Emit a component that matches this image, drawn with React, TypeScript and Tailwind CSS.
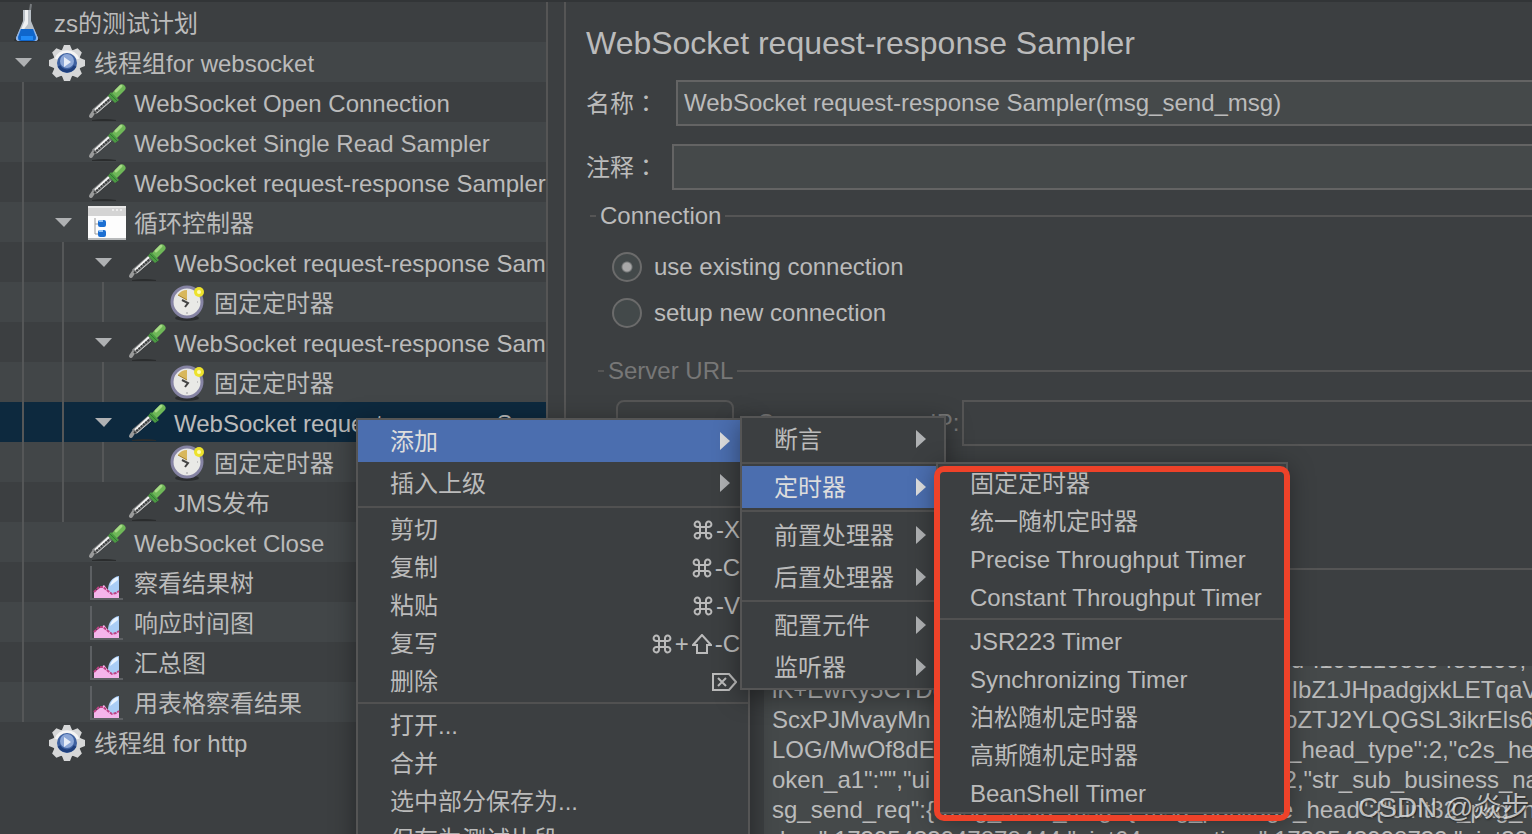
import { Fragment, ReactNode } from "react";

type IconName = "plan" | "group" | "sampler" | "loop" | "timer" | "chart";

type TreeRow = {
  label: string;
  depth: number;
  icon: IconName;
  open?: boolean;
  selected?: boolean;
};

type MenuEntry = {
  label: string;
  keys?: ReactNode;
  submenu?: boolean;
  active?: boolean;
};

const rows: TreeRow[] = [
  { label: "zs的测试计划", depth: 0, icon: "plan" },
  { label: "线程组for websocket", depth: 1, icon: "group", open: true },
  { label: "WebSocket Open Connection", depth: 2, icon: "sampler" },
  { label: "WebSocket Single Read Sampler", depth: 2, icon: "sampler" },
  { label: "WebSocket request-response Sampler", depth: 2, icon: "sampler" },
  { label: "循环控制器", depth: 2, icon: "loop", open: true },
  { label: "WebSocket request-response Sampler", depth: 3, icon: "sampler", open: true },
  { label: "固定定时器", depth: 4, icon: "timer" },
  { label: "WebSocket request-response Sampler", depth: 3, icon: "sampler", open: true },
  { label: "固定定时器", depth: 4, icon: "timer" },
  { label: "WebSocket request-response Sampler", depth: 3, icon: "sampler", open: true, selected: true },
  { label: "固定定时器", depth: 4, icon: "timer" },
  { label: "JMS发布", depth: 3, icon: "sampler" },
  { label: "WebSocket Close", depth: 2, icon: "sampler" },
  { label: "察看结果树", depth: 2, icon: "chart" },
  { label: "响应时间图", depth: 2, icon: "chart" },
  { label: "汇总图", depth: 2, icon: "chart" },
  { label: "用表格察看结果", depth: 2, icon: "chart" },
  { label: "线程组 for http", depth: 1, icon: "group" },
];

const requestData = [
  " ".repeat(75) + '_id":195216889489269,',
  "lK+EwRy5CTDc" + " ".repeat(52) + "IbZ1JHpadgjxkLETqaV",
  "ScxPJMvayMn" + " ".repeat(53) + "oZTJ2YLQGSL3ikrEls6",
  "LOG/MwOf8dE" + " ".repeat(53) + '_head_type":2,"c2s_head',
  'oken_a1":"","ui' + " ".repeat(53) + '2,"str_sub_business_name',
  'sg_send_req":{"msg_send_msg":{"msg_package_head":{"uint32_pkg_num',
  'dom":17395433947878444,"uint64_msg_time":1739543998732,"uint32_msg',
].join("\n");

function PlanIcon() {
  return (
    <svg width="38" height="40" viewBox="0 0 38 40" aria-hidden="true">
      <ellipse cx="19" cy="38" rx="13" ry="2" fill="#2b2d2f" />
      <path d="M22 9l1-7" stroke="#777b7e" strokeWidth="2" />
      <path d="M15 8h8v11l7 17c0 2-1 3-3 3H11c-2 0-3-1-3-3l7-17z" fill="#b9c0c7" />
      <path d="M17 8h3v14l-6 8h-2l5-12z" fill="#eef0f2" />
      <path d="M12 27h14l4 9c0 2-1 3-3 3H11c-2 0-3-1-3-3z" fill="#8db4ea" />
      <path d="M13 27h12l3 8c0 3-1 4-3 4H13c-2 0-3-1-3-4z" fill="#0f66cc" />
      <path d="M13 36h12" stroke="#2089f5" strokeWidth="4" />
    </svg>
  );
}

function GroupIcon() {
  return (
    <svg width="38" height="40" viewBox="0 0 38 40" aria-hidden="true">
      <g fill="#d6d7d8">
        <circle cx="19" cy="21" r="14" />
        {[0, 45, 90, 135].map((a) => (
          <path key={a} d="M14 8l2-5h6l2 5v26l-2 5h-6l-2-5z" transform={`rotate(${a} 19 21)`} />
        ))}
      </g>
      <path d="M8 17a12 12 0 0 1 22 0" stroke="#f4f4f4" strokeWidth="3" fill="none" />
      <circle cx="19" cy="21" r="10" fill="#3d60a0" />
      <circle cx="19" cy="19" r="7" fill="#8ba6d6" />
      <path d="M11 24a9 9 0 0 0 16 0" stroke="#1f3f7c" strokeWidth="3" fill="none" />
      <path d="M16 15l7 5-7 5z" fill="#e6edf8" />
    </svg>
  );
}

function SamplerIcon() {
  return (
    <svg width="38" height="40" viewBox="0 0 38 40" aria-hidden="true">
      <path d="M4 38q12-2 24 0v1H4z" fill="#2a2c2d" />
      <path d="M3 34L7 28" stroke="#9a9b9b" strokeWidth="4" strokeLinecap="round" />
      <path d="M6 30L22 16" stroke="#87898a" strokeWidth="6" />
      <path d="M7 28L21 15" stroke="#f4f4f4" strokeWidth="2" />
      <path d="M6 31L22 17" stroke="#37393a" strokeWidth="2" strokeDasharray="2 1" />
      <path d="M9 31L23 19" stroke="#c9caca" strokeWidth="1" />
      <path d="M27 13L34 6" stroke="#6fb858" strokeWidth="7" strokeLinecap="round" />
      <path d="M23 10l8 8-4 3-7-7z" fill="#4b9a42" />
      <path d="M28 9L33 4" stroke="#a6da85" strokeWidth="3" strokeLinecap="round" />
      <path d="M22 12l7 7" stroke="#2f7a34" strokeWidth="1" />
    </svg>
  );
}

function LoopIcon() {
  return (
    <svg width="38" height="40" viewBox="0 0 38 40" aria-hidden="true">
      <path d="M0 4h38v34H0z" fill="#fdfdfd" />
      <path d="M0 4h38v10H0z" fill="#d4d4d4" />
      <path d="M0 5h38" stroke="#e8e8e8" strokeWidth="2" />
      <path d="M24 8h2M28 8h2M32 8h2" stroke="#ececec" strokeWidth="2" />
      <path d="M0 37h38" stroke="#b8babb" strokeWidth="2" />
      <path d="M7 16v16h4M7 22h4" stroke="#9b9b9b" strokeWidth="1" fill="none" />
      <rect x="10" y="18" width="8" height="7" rx="2" fill="#1c6fd2" />
      <rect x="10" y="28" width="8" height="7" rx="2" fill="#1c6fd2" />
      <path d="M11 19h4M11 29h4" stroke="#8cc0f6" strokeWidth="2" />
    </svg>
  );
}

function TimerIcon() {
  return (
    <svg width="38" height="40" viewBox="0 0 38 40" aria-hidden="true">
      <ellipse cx="19" cy="36" rx="12" ry="3" fill="#2c2e30" />
      <circle cx="19" cy="20" r="15" fill="#e9e9e6" stroke="#8583a3" strokeWidth="3" />
      <path d="M19 18L10 13q3-5 9-5z" fill="#d8b75c" />
      <path d="M10 13l9 5" stroke="#a5822c" strokeWidth="1" />
      <path d="M14 18l6 3-3 4" stroke="#444444" strokeWidth="2" fill="none" />
      <path d="M19 30v2M29 20h1" stroke="#c4c4c4" strokeWidth="2" />
      <circle cx="31" cy="10" r="5" fill="#ede22d" />
      <circle cx="31" cy="10" r="2" fill="#fffcb8" />
    </svg>
  );
}

function ChartIcon() {
  return (
    <svg width="38" height="40" viewBox="0 0 38 40" aria-hidden="true">
      <path d="M3 4v33h32" stroke="#5d6063" strokeWidth="2" fill="none" />
      <path d="M31 14c-7 1-11 7-11 14l4 5 3-1 4-3z" fill="#a9cdf6" />
      <path d="M30 15c-5 1-7 5-8 9l8-6z" fill="#eaf4ff" />
      <path d="M6 36v-6l10-7 4 5 4 4 4-1 3-2v7z" fill="#f4b4ea" />
      <path d="M6 30l5-5h4l5 4 4 3 4-1 3-2" stroke="#bd4083" strokeWidth="2" strokeDasharray="3 1" fill="none" />
    </svg>
  );
}

const icons: Record<IconName, () => ReactNode> = {
  plan: PlanIcon,
  group: GroupIcon,
  sampler: SamplerIcon,
  loop: LoopIcon,
  timer: TimerIcon,
  chart: ChartIcon,
};

function Tree() {
  return (
    <ul className="pt-[2px]">
      {rows.map((row, i) => {
        const Icon = icons[row.icon];
        const stripe = i % 2 === 1 ? "bg-[#424648]" : "bg-[#3c3f41]";
        return (
          <li
            key={i}
            className={`flex h-10 items-stretch whitespace-nowrap ${row.selected ? "bg-[#0d293e]" : stripe}`}
          >
            {Array.from({ length: row.depth }).map((_, col) => (
              <span key={col} className="flex w-10 shrink-0 pl-[15px]">
                {col < row.depth - 1 && <span className="ml-[7px] w-[2px] bg-[#555758]" />}
                {col === row.depth - 1 && row.open && (
                  <svg width="17" height="40" viewBox="0 0 17 40" aria-hidden="true">
                    <path d="M0 16h17l-8 9z" fill="#afb1b3" />
                  </svg>
                )}
              </span>
            ))}
            <span className="mr-2 ml-2 w-[38px] shrink-0">
              <Icon />
            </span>
            <span className="leading-[44px]">{row.label}</span>
          </li>
        );
      })}
    </ul>
  );
}

function Menu({ groups }: { groups: MenuEntry[][] }) {
  return (
    <div role="menu">
      {groups.map((group, i) => (
        <Fragment key={i}>
          {i > 0 && <hr className="my-[2px] border-t-2 border-[#515151]" />}
          {group.map((entry) => (
            <button
              key={entry.label}
              type="button"
              role="menuitem"
              className={`flex w-full items-center justify-between pt-[2px] pl-8 text-left whitespace-nowrap ${
                entry.submenu ? "h-[42px]" : "h-[38px]"
              } ${entry.active ? "bg-[#4b6eaf] text-[#dddddd]" : ""}`}
            >
              <span>{entry.label}</span>
              {entry.keys && <span className="flex items-center pr-2">{entry.keys}</span>}
              {entry.submenu && (
                <svg className="mr-[18px] mb-[2px]" width="10" height="18" viewBox="0 0 10 18" aria-hidden="true">
                  <path d="M0 0l10 9-10 9z" fill={entry.active ? "#dddddd" : "#afb1b3"} />
                </svg>
              )}
            </button>
          ))}
        </Fragment>
      ))}
    </div>
  );
}

function CommandKey() {
  return (
    <svg className="mr-[3px]" width="20" height="20" viewBox="0 0 20 20" fill="none" stroke="currentColor" strokeWidth="2" role="img" aria-label="Command">
      <path d="M7 7h6v6H7zM7 7H4.500A2.700 2.700 0 1 1 7 4.500zM13 7V4.500A2.700 2.700 0 1 1 15.500 7zM13 13h2.500A2.700 2.700 0 1 1 13 15.500zM7 13v2.500A2.700 2.700 0 1 1 4.500 13z" />
    </svg>
  );
}

function ShiftKey() {
  return (
    <svg className="mx-[3px]" width="20" height="20" viewBox="0 0 20 20" fill="none" stroke="currentColor" strokeWidth="2" role="img" aria-label="Shift">
      <path d="M10 1L1 11h4v8h10v-8h4z" />
    </svg>
  );
}

function DeleteKey() {
  return (
    <svg className="mr-[3px]" width="25" height="18" viewBox="0 0 25 18" fill="none" stroke="currentColor" strokeWidth="2" role="img" aria-label="Delete">
      <path d="M1 1h16l7 8-7 8H1zM6 5l8 8M14 5l-8 8" />
    </svg>
  );
}

const mainMenu: MenuEntry[][] = [
  [
    { label: "添加", submenu: true, active: true },
    { label: "插入上级", submenu: true },
  ],
  [
    { label: "剪切", keys: <><CommandKey />-X</> },
    { label: "复制", keys: <><CommandKey />-C</> },
    { label: "粘贴", keys: <><CommandKey />-V</> },
    { label: "复写", keys: <><CommandKey />+<ShiftKey />-C</> },
    { label: "删除", keys: <DeleteKey /> },
  ],
  [{ label: "打开..." }, { label: "合并" }, { label: "选中部分保存为..." }, { label: "保存为测试片段" }],
];

const addMenu: MenuEntry[][] = [
  [{ label: "断言", submenu: true }],
  [{ label: "定时器", submenu: true, active: true }],
  [
    { label: "前置处理器", submenu: true },
    { label: "后置处理器", submenu: true },
  ],
  [
    { label: "配置元件", submenu: true },
    { label: "监听器", submenu: true },
  ],
];

const timerMenu: MenuEntry[][] = [
  [
    { label: "固定定时器" },
    { label: "统一随机定时器" },
    { label: "Precise Throughput Timer" },
    { label: "Constant Throughput Timer" },
  ],
  [
    { label: "JSR223 Timer" },
    { label: "Synchronizing Timer" },
    { label: "泊松随机定时器" },
    { label: "高斯随机定时器" },
    { label: "BeanShell Timer" },
  ],
];

function Colon() {
  return <span className="font-['Noto_Sans_CJK_TC',sans-serif]">：</span>;
}

function SamplerForm() {
  return (
    <form className="min-w-0 flex-1 border-l-2 border-[#555555] pt-[21px]">
      <h1 className="pl-5 text-[32px] leading-10">WebSocket request-response Sampler</h1>
      <div className="mt-[17px] flex items-center pl-5">
        <label htmlFor="name" className="w-[90px] shrink-0 leading-8">
          名称
          <Colon />
        </label>
        <input
          id="name"
          className="h-[46px] min-w-0 flex-1 border-2 border-r-0 border-[#646464] bg-[#45494a] px-[6px]"
          defaultValue="WebSocket request-response Sampler(msg_send_msg)"
        />
      </div>
      <div className="mt-[18px] flex items-center pl-5">
        <label htmlFor="comment" className="w-[86px] shrink-0 leading-8">
          注释
          <Colon />
        </label>
        <input
          id="comment"
          className="h-[46px] min-w-0 flex-1 border-2 border-r-0 border-[#646464] bg-[#45494a] px-[6px]"
        />
      </div>

      <fieldset className="mt-2 ml-6 border-t-2 border-[#555555]">
        <legend className="ml-[6px] px-1 leading-9">Connection</legend>
        <div className="flex flex-col gap-4 pt-[18px] pl-[22px]">
          {["use existing connection", "setup new connection"].map((text, i) => (
            <label key={text} className="flex h-[30px] items-center gap-3">
              <input
                type="radio"
                name="connection"
                defaultChecked={i === 0}
                className="size-[30px] appearance-none rounded-full border-2 border-[#6b6b6b] bg-[#43494a] checked:bg-[radial-gradient(circle,#a8a8a8_4px,#43494a_6px)]"
              />
              {text}
            </label>
          ))}
        </div>
        <fieldset disabled className="mt-[25px] ml-2 border-t-2 border-[#555555] text-[#777777]">
          <legend className="ml-[6px] px-1 leading-9">Server URL</legend>
          <div className="flex items-center pt-[11px] pl-[18px]">
            <select aria-label="Protocol" className="h-[46px] w-[118px] appearance-none rounded-lg border-2 border-[#555555]" />
            <label htmlFor="server" className="ml-6 w-[204px] shrink-0">Server name or IP:</label>
            <input id="server" className="h-[46px] min-w-0 flex-1 border-2 border-r-0 border-[#555555]" />
          </div>
        </fieldset>
      </fieldset>

      <fieldset className="mt-[122px] ml-6 border-t-2 border-[#555555] pt-24 pl-[174px]">
        <div className="overflow-hidden bg-[#45494a]">
          <textarea
            aria-label="Request data"
            className="-mt-[21px] block h-[220px] w-full resize-none overflow-hidden pl-2 leading-[30px] whitespace-pre"
            defaultValue={requestData}
          />
        </div>
      </fieldset>
    </form>
  );
}

function App() {
  return (
    <main className="relative flex h-screen overflow-hidden border-t-2 border-[#323537] bg-[#3c3f41] font-['Liberation_Sans','Noto_Sans_CJK_SC',sans-serif] text-2xl text-[#bbbbbb]">
      <nav className="-mt-[2px] w-[548px] shrink-0 overflow-hidden border-r-2 border-[#555555]">
        <Tree />
      </nav>
      <div className="w-4 shrink-0" />
      <SamplerForm />

      <div className="absolute top-[416px] left-[356px] w-[394px] border-2 border-[#555555] bg-[#3c3f41] shadow-[0_6px_24px_rgba(0,0,0,0.4)]">
        <Menu groups={mainMenu} />
      </div>
      <div className="absolute top-[414px] left-[740px] w-[206px] border-2 border-[#555555] bg-[#3c3f41] shadow-[0_6px_24px_rgba(0,0,0,0.4)]">
        <Menu groups={addMenu} />
      </div>
      <div className="absolute top-[460px] left-[936px] w-[352px] border-2 border-[#555555] bg-[#3c3f41] shadow-[0_6px_24px_rgba(0,0,0,0.4)]">
        <Menu groups={timerMenu} />
      </div>
      <div className="pointer-events-none absolute top-[464px] left-[934px] h-[355px] w-[356px] rounded-[10px] border-6 border-[#ee4229]" />

      <p className="absolute top-[786px] left-[1358px] text-[28px] leading-10 whitespace-nowrap text-white/70 [text-shadow:1px_1px_2px_#222222]">
        CSDN @焱步
      </p>
    </main>
  );
}

export default App;
